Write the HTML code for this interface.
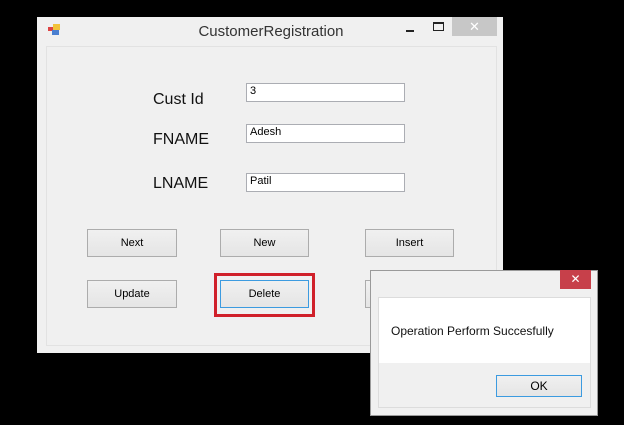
<!DOCTYPE html>
<html><head><style>
body{margin:0;width:624px;height:425px;background:#000;position:relative;overflow:hidden;font-family:"Liberation Sans",sans-serif;}
.a{position:absolute;box-sizing:border-box;}
.btn{position:absolute;box-sizing:border-box;border:1px solid #acacac;background:linear-gradient(#f0f0f0,#e5e5e5);font-size:11px;color:#000;display:flex;align-items:center;justify-content:center;}
.tb{position:absolute;box-sizing:border-box;background:#fff;border:1px solid #abadb3;font-size:11px;padding:1px 3px;height:19px;}
.lbl{position:absolute;font-size:16px;color:#111;}
</style></head><body>
<div class="a" style="left:37px;top:17px;width:466px;height:336px;background:#f0f0f0;"></div>
<div class="a" style="left:46px;top:46px;width:451px;height:300px;background:#f0f0f0;border:1px solid #e2e2e2;"></div>
<div class="a" style="left:48px;top:24px;width:12px;height:11px;">
<div class="a" style="left:0;top:3px;width:5px;height:4px;background:#d44;"></div>
<div class="a" style="left:5px;top:0;width:7px;height:6px;background:#f2c33a;"></div>
<div class="a" style="left:4px;top:6px;width:7px;height:5px;background:#4a7fd0;"></div></div>
<div class="a" style="left:150px;top:23px;width:242px;text-align:center;font-size:15px;color:#333;">CustomerRegistration</div>
<div class="a" style="left:406px;top:30px;width:8px;height:2px;background:#222;"></div>
<div class="a" style="left:433px;top:22px;width:11px;height:9px;border:1px solid #222;border-top-width:2px;"></div>
<div class="a" style="left:452px;top:17px;width:45px;height:19px;background:#c7c7c7;color:#fff;font-size:13px;text-align:center;line-height:19px;">✕</div>
<div class="lbl" style="left:153px;top:91px;">Cust Id</div>
<div class="lbl" style="left:153px;top:131px;">FNAME</div>
<div class="lbl" style="left:153px;top:175px;">LNAME</div>
<div class="tb" style="left:246px;top:83px;width:159px;">3</div>
<div class="tb" style="left:246px;top:124px;width:159px;">Adesh</div>
<div class="tb" style="left:246px;top:173px;width:159px;">Patil</div>
<div class="btn" style="left:87px;top:229px;width:90px;height:28px;">Next</div>
<div class="btn" style="left:220px;top:229px;width:89px;height:28px;">New</div>
<div class="btn" style="left:365px;top:229px;width:89px;height:28px;">Insert</div>
<div class="btn" style="left:87px;top:280px;width:90px;height:28px;">Update</div>
<div class="btn" style="left:365px;top:280px;width:89px;height:28px;"></div>
<div class="a" style="left:214px;top:273px;width:101px;height:44px;border:3px solid #d0202a;"></div>
<div class="btn" style="left:220px;top:280px;width:89px;height:28px;border-color:#3c9be0;">Delete</div>
<div class="a" style="left:370px;top:270px;width:228px;height:146px;background:#f0f0f0;border:1px solid #9a9a9a;"></div>
<div class="a" style="left:560px;top:270px;width:31px;height:19px;background:#c7404a;color:#fff;font-size:12px;text-align:center;line-height:19px;">✕</div>
<div class="a" style="left:378px;top:297px;width:213px;height:111px;background:#f0f0f0;border:1px solid #dcdcdc;"></div>
<div class="a" style="left:379px;top:298px;width:211px;height:65px;background:#fff;"></div>
<div class="a" style="left:391px;top:324px;font-size:12px;color:#111;">Operation Perform Succesfully</div>
<div class="btn" style="left:496px;top:375px;width:86px;height:22px;border-color:#3c9be0;font-size:12px;">OK</div>
</body></html>
